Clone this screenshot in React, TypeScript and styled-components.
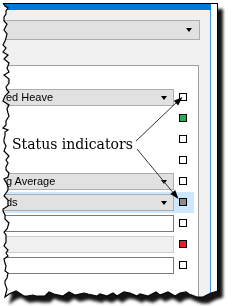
import styled, { createGlobalStyle } from 'styled-components';

const GlobalStyle = createGlobalStyle`
  html, body {
    margin: 0;
    padding: 0;
    background: #fff;
  }
  body {
    font-family: 'Liberation Sans', Arial, sans-serif;
  }
`;

type Status = 'none' | 'ok' | 'busy' | 'error';
type Kind = 'combo' | 'text' | 'disabled' | 'empty';

interface RowData {
  kind: Kind;
  label?: string;
  status: Status;
  selected?: boolean;
}

const rows: RowData[] = [
  { kind: 'combo', label: 'ed Heave', status: 'none' },
  { kind: 'empty', status: 'ok' },
  { kind: 'empty', status: 'none' },
  { kind: 'empty', status: 'none' },
  { kind: 'combo', label: 'g Average', status: 'none' },
  { kind: 'combo', label: 'ds', status: 'busy', selected: true },
  { kind: 'text', status: 'none' },
  { kind: 'disabled', status: 'error' },
  { kind: 'text', status: 'none' },
];

const statusColors: Record<Status, string> = {
  none: '#ffffff',
  ok: '#22b14c',
  busy: '#8c8c8c',
  error: '#ed1c24',
};

// paper size (torn screenshot)
const PAPER_W = 218;
const PAPER_H = 298;

type Pt = [number, number];

function makeRand(seed: number) {
  let s = seed;
  return () => {
    s = (s * 16807) % 2147483647;
    return (s - 1) / 2147483646;
  };
}

function buildEdges() {
  const r = makeRand(11);
  const left: Pt[] = [];
  let y = 0;
  while (y < 291) {
    left.push([3 + Math.round(r() * 6), y]);
    y += 2 + Math.round(r() * 3);
  }
  left.push([5, 294]);
  const bottom: Pt[] = [];
  let x = 9;
  while (x < 212) {
    bottom.push([x, 288 + Math.round(r() * 6)]);
    x += 3 + Math.round(r() * 6);
  }
  bottom.push([PAPER_W, 288]);
  return { left, bottom };
}

const edges = buildEdges();

const clipPolygon = [
  [edges.left[0][0], 0] as Pt,
  [PAPER_W, 0] as Pt,
  ...[...edges.bottom].reverse(),
  ...[...edges.left].reverse(),
]
  .map(([x, y]) => `${x}px ${y}px`)
  .join(', ');

const outlinePoints = [...edges.left, ...edges.bottom].map(([x, y]) => `${x},${y}`).join(' ');

function arrowHead(x1: number, y1: number, x2: number, y2: number) {
  const len = 9;
  const half = 3.2;
  const a = Math.atan2(y2 - y1, x2 - x1);
  const bx = x2 - len * Math.cos(a);
  const by = y2 - len * Math.sin(a);
  const px = -Math.sin(a) * half;
  const py = Math.cos(a) * half;
  return `${x2},${y2} ${bx + px},${by + py} ${bx - px},${by - py}`;
}

function App() {
  return (
    <>
      <GlobalStyle />
      <Stage>
        <Sheet>
          <Paper $clip={clipPolygon}>
            <Window>
              <TitleBar />
              <WindowBody>
                <TopCombo>
                  <DropArrow />
                </TopCombo>
                <Panel>
                  {rows.map((row, i) => (
                    <Row key={i} $selected={row.selected}>
                      {row.kind === 'combo' && (
                        <Combo>
                          <ComboText>{row.label}</ComboText>
                          <DropArrow />
                        </Combo>
                      )}
                      {row.kind === 'text' && <TextBox />}
                      {row.kind === 'disabled' && <TextBox $disabled />}
                      {row.kind === 'empty' && <Spacer />}
                      <StatusBox $color={statusColors[row.status]} />
                    </Row>
                  ))}
                </Panel>
              </WindowBody>
            </Window>
            <Margin />
            <CalloutText>Status indicators</CalloutText>
            <CalloutArrows viewBox={`0 0 ${PAPER_W} ${PAPER_H}`}>
              <line x1="136" y1="138" x2="178" y2="98" stroke="#333" strokeWidth="1" />
              <polygon points={arrowHead(136, 138, 182.5, 94)} fill="#000" />
              <line x1="137" y1="146" x2="175" y2="192" stroke="#333" strokeWidth="1" />
              <polygon points={arrowHead(137, 146, 178.5, 196)} fill="#000" />
            </CalloutArrows>
          </Paper>
          <TornEdge viewBox={`0 0 ${PAPER_W + 2} ${PAPER_H + 2}`}>
            <polyline points={outlinePoints} fill="none" stroke="#000" strokeWidth="1.2" />
          </TornEdge>
        </Sheet>
      </Stage>
    </>
  );
}

const Stage = styled.div`
  width: 240px;
  height: 306px;
  overflow: hidden;
  padding-top: 3px;
  box-sizing: border-box;
`;

const Sheet = styled.div`
  position: relative;
  width: ${PAPER_W}px;
  height: ${PAPER_H}px;
  filter: drop-shadow(5px 6px 1.5px rgba(0, 0, 0, 0.92));
`;

const Paper = styled.div<{ $clip: string }>`
  position: relative;
  display: flex;
  width: ${PAPER_W}px;
  height: ${PAPER_H}px;
  box-sizing: border-box;
  background: #fff;
  border-top: 1px solid #000;
  border-right: 1px solid #000;
  clip-path: polygon(${(p) => p.$clip});
`;

const Window = styled.div`
  display: flex;
  flex-direction: column;
  width: 211px;
  flex-shrink: 0;
  background: #f0f0f0;
`;

const TitleBar = styled.div`
  flex-shrink: 0;
  height: 6px;
  background: #0078d7;
`;

const WindowBody = styled.div`
  flex: 1;
  display: flex;
  flex-direction: column;
  padding: 10px 11px 0 0;
  border-right: 1px solid #4a93dc;
`;

const TopCombo = styled.div`
  display: flex;
  flex-shrink: 0;
  align-items: center;
  justify-content: flex-end;
  height: 20px;
  margin-right: -1px;
  margin-bottom: 25px;
  padding-right: 7px;
  box-sizing: border-box;
  background: #e1e1e1;
  border: 1px solid #adadad;
  border-left: none;
`;

const Panel = styled.div`
  flex: 1;
  display: flex;
  flex-direction: column;
  padding-top: 21px;
  background: #fff;
  border-top: 1px solid #a0a0a0;
  border-right: 1px solid #a0a0a0;
`;

const Row = styled.div<{ $selected?: boolean }>`
  display: flex;
  flex-shrink: 0;
  align-items: flex-start;
  width: 194px;
  height: 21px;
  padding-top: 2px;
  box-sizing: border-box;
  background: ${(p) => (p.$selected ? '#cce8ff' : 'transparent')};
`;

const Combo = styled.div`
  display: flex;
  align-items: center;
  width: 174px;
  height: 17px;
  padding: 0 6px;
  box-sizing: border-box;
  background: #e1e1e1;
  border: 1px solid #adadad;
  border-left: none;
`;

const ComboText = styled.span`
  flex: 1;
  font-size: 11px;
  line-height: 15px;
  color: #000;
  white-space: nowrap;
`;

const DropArrow = styled.span`
  width: 0;
  height: 0;
  border-left: 3.5px solid transparent;
  border-right: 3.5px solid transparent;
  border-top: 4px solid #000;
`;

const TextBox = styled.div<{ $disabled?: boolean }>`
  width: 174px;
  height: 17px;
  box-sizing: border-box;
  background: ${(p) => (p.$disabled ? '#f0f0f0' : '#fff')};
  border: 1px solid ${(p) => (p.$disabled ? '#cccccc' : '#7a7a7a')};
  border-left: none;
`;

const Spacer = styled.div`
  width: 174px;
`;

const StatusBox = styled.div<{ $color: string }>`
  width: 8px;
  height: 8px;
  margin: 4px 0 0 5px;
  box-sizing: border-box;
  background: ${(p) => p.$color};
  border: 1px solid #000;
`;

const Margin = styled.div`
  flex: 1;
  background: #fff;
`;

const CalloutText = styled.div`
  position: absolute;
  left: 12px;
  top: 132px;
  font-family: 'DejaVu Serif', 'Liberation Serif', serif;
  font-size: 14px;
  line-height: 16px;
  color: #000;
  white-space: nowrap;
`;

const CalloutArrows = styled.svg`
  position: absolute;
  left: 0;
  top: -1px;
  width: ${PAPER_W}px;
  height: ${PAPER_H}px;
  pointer-events: none;
`;

const TornEdge = styled.svg`
  position: absolute;
  left: 0;
  top: 0;
  width: ${PAPER_W + 2}px;
  height: ${PAPER_H + 2}px;
  overflow: visible;
  pointer-events: none;
`;

export default App;
